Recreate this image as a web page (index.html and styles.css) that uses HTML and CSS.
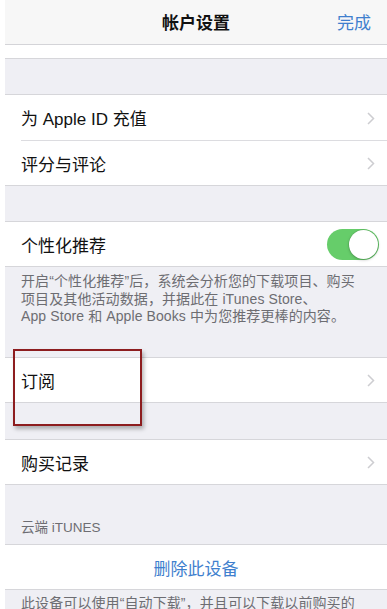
FILE: index.html
```html
<!DOCTYPE html>
<html lang="zh-CN">
<head>
<meta charset="utf-8">
<link rel="stylesheet" href="styles.css">
</head>
<body>
<div class="frame">
  <div class="screen">
    <header class="nav">
      <span class="nav-side"></span>
      <span class="nav-title">帐户设置</span>
      <span class="nav-side nav-done">完成</span>
    </header>
    <div class="stub"></div>
    <div class="gap g35"></div>
    <section class="group">
      <div class="row">
        <span class="label">为 Apple ID 充值</span>
        <svg class="chev" width="8" height="13" viewBox="0 0 8 13"><path d="M1 1l5.5 5.5L1 12" fill="none" stroke="#cdcdd1" stroke-width="1.5"/></svg>
      </div>
      <div class="row">
        <span class="label">评分与评论</span>
        <svg class="chev" width="8" height="13" viewBox="0 0 8 13"><path d="M1 1l5.5 5.5L1 12" fill="none" stroke="#cdcdd1" stroke-width="1.5"/></svg>
      </div>
    </section>
    <div class="gap g35"></div>
    <section class="group">
      <div class="row">
        <span class="label">个性化推荐</span>
        <span class="toggle"><span class="knob"></span></span>
      </div>
    </section>
    <p class="footer">开启“个性化推荐”后，系统会分析您的下载项目、购买<br>项目及其他活动数据，并据此在 iTunes Store、<br>App Store 和 Apple Books 中为您推荐更棒的内容。</p>
    <section class="group">
      <div class="row">
        <span class="label">订阅</span>
        <svg class="chev" width="8" height="13" viewBox="0 0 8 13"><path d="M1 1l5.5 5.5L1 12" fill="none" stroke="#cdcdd1" stroke-width="1.5"/></svg>
      </div>
    </section>
    <div class="gap g36"></div>
    <section class="group">
      <div class="row">
        <span class="label">购买记录</span>
        <svg class="chev" width="8" height="13" viewBox="0 0 8 13"><path d="M1 1l5.5 5.5L1 12" fill="none" stroke="#cdcdd1" stroke-width="1.5"/></svg>
      </div>
    </section>
    <div class="section-head">云端 iTUNES</div>
    <section class="group">
      <div class="row row-center">
        <span class="action">删除此设备</span>
      </div>
    </section>
    <p class="footer footer-last">此设备可以使用“自动下载”，并且可以下载以前购买的</p>
    <div class="highlight"></div>
  </div>
</div>
</body>
</html>
```
FILE: styles.css
```css
* { box-sizing: border-box; }
html, body {
  margin: 0;
  padding: 0;
  background: #ffffff;
}
body {
  width: 387px;
  height: 609px;
  overflow: hidden;
  font-family: "Liberation Sans", "Noto Sans CJK SC", sans-serif;
}
.frame {
  padding-left: 5px;
  background: #ffffff;
  height: 609px;
}
.screen {
  position: relative;
  background: #efeff4;
  height: 609px;
  overflow: hidden;
}
.nav {
  height: 45px;
  background: #f7f7f7;
  border-bottom: 1px solid #d4d4d8;
  display: flex;
  align-items: center;
  justify-content: space-between;
  padding: 0 16px 1px 16px;
}
.nav-side {
  width: 50px;
  font-size: 17px;
}
.nav-title {
  font-size: 17px;
  font-weight: 600;
  color: #111;
}
.nav-done {
  text-align: right;
  color: #3f7fce;
}
.stub {
  height: 14px;
  background: #ffffff;
  border-bottom: 1px solid #d6d6da;
}
.gap { background: #efeff4; }
.g35 { height: 35px; }
.g36 { height: 36px; }
.group {
  background: #ffffff;
  border-top: 1px solid #d6d6da;
  border-bottom: 1px solid #d6d6da;
}
.row {
  height: 46px;
  display: flex;
  align-items: center;
  justify-content: space-between;
  margin-left: 16px;
  padding-right: 12px;
  border-bottom: 1px solid #dcdce0;
}
.row:last-child { border-bottom: none; height: 44px; }
.label {
  font-size: 17px;
  color: #111;
}
.chev { display: block; margin-top: 1px; }
.toggle {
  width: 52px;
  height: 31px;
  border-radius: 16px;
  background: #66cd6a;
  margin-right: -4px;
  display: flex;
  justify-content: flex-end;
  align-items: center;
  padding: 1px;
}
.knob {
  width: 29px;
  height: 29px;
  border-radius: 50%;
  background: #ffffff;
  box-shadow: 0 1px 3px rgba(0,0,0,0.25), 0 0 0 0.5px rgba(0,0,0,0.12);
}
.footer {
  margin: 0;
  padding: 6px 10px 0 16px;
  height: 90px;
  font-size: 14px;
  line-height: 17.5px;
  color: #6d6d72;
  letter-spacing: 0.1px;
  white-space: nowrap;
}
.footer-last {
  height: auto;
  padding-top: 5px;
}
.section-head {
  height: 59px;
  display: flex;
  align-items: flex-end;
  padding: 0 16px 8px 16px;
  font-size: 13.5px;
  color: #6d6d72;
}
.row-center {
  justify-content: center;
  margin-left: 0;
  padding-right: 0;
}
.action {
  font-size: 17px;
  color: #3f7fce;
}
.highlight {
  position: absolute;
  left: 8px;
  top: 349px;
  width: 129px;
  height: 77px;
  border: 2px solid #8d1d1f;
  box-shadow: 2px 3px 4px rgba(0,0,0,0.28);
}
```
